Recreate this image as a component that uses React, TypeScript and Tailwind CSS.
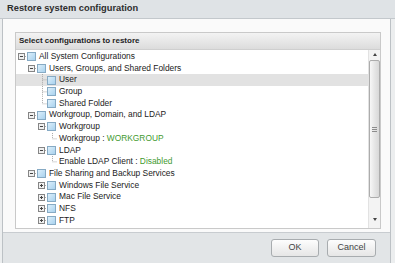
import React from 'react';

type Row = {
  level: number;
  text?: string;
  label?: string;
  value?: string;
  exp?: 'minus' | 'plus';
  elbow?: 'mid' | 'end';
  cb?: boolean;
  selected?: boolean;
};

const rows: Row[] = [
  { level: 0, text: 'All System Configurations', exp: 'minus', cb: true },
  { level: 1, text: 'Users, Groups, and Shared Folders', exp: 'minus', cb: true },
  { level: 2, text: 'User', elbow: 'mid', cb: true, selected: true },
  { level: 2, text: 'Group', elbow: 'mid', cb: true },
  { level: 2, text: 'Shared Folder', elbow: 'end', cb: true },
  { level: 1, text: 'Workgroup, Domain, and LDAP', exp: 'minus', cb: true },
  { level: 2, text: 'Workgroup', exp: 'minus', cb: true },
  { level: 3, label: 'Workgroup : ', value: 'WORKGROUP', elbow: 'end' },
  { level: 2, text: 'LDAP', exp: 'minus', cb: true },
  { level: 3, label: 'Enable LDAP Client : ', value: 'Disabled', elbow: 'end' },
  { level: 1, text: 'File Sharing and Backup Services', exp: 'minus', cb: true },
  { level: 2, text: 'Windows File Service', exp: 'plus', cb: true },
  { level: 2, text: 'Mac File Service', exp: 'plus', cb: true },
  { level: 2, text: 'NFS', exp: 'plus', cb: true },
  { level: 2, text: 'FTP', exp: 'plus', cb: true },
];

function Expander({ kind }: { kind: 'minus' | 'plus' }) {
  return (
    <svg width="9" height="9" viewBox="0 0 9 9" className="shrink-0">
      <rect x="0.5" y="1.5" width="6" height="6" fill="#f0f0f0" stroke="#858585" />
      <line x1="2" y1="4.5" x2="5" y2="4.5" stroke="#444" />
      {kind === 'plus' && <line x1="3.5" y1="3" x2="3.5" y2="6" stroke="#444" />}
      <line x1="7" y1="4.5" x2="9" y2="4.5" stroke="#aaa" strokeDasharray="1 1" />
    </svg>
  );
}

function Elbow({ kind }: { kind: 'mid' | 'end' }) {
  return (
    <svg width="9" height="12" viewBox="0 0 9 12" preserveAspectRatio="none" className="shrink-0 h-full">
      <line x1="4.5" y1="0" x2="4.5" y2={kind === 'mid' ? 12 : 6} stroke="#a8a8a8" strokeDasharray="1 1" />
      <line x1="4.5" y1="6" x2="9" y2="6" stroke="#a8a8a8" strokeDasharray="1 1" />
    </svg>
  );
}

function Checkbox() {
  return (
    <div className="w-[9px] h-[9px] shrink-0 border border-[#86aac4] bg-gradient-to-br from-[#dceffb] to-[#a9d2ee]" />
  );
}

function TreeRow({ row }: { row: Row }) {
  return (
    <div
      className={`h-[11.7px] flex items-center ${row.selected ? 'bg-[#e2e2e2]' : ''}`}
      style={{ paddingLeft: 2 + row.level * 10 }}
    >
      {row.exp && <Expander kind={row.exp} />}
      {row.elbow && <Elbow kind={row.elbow} />}
      {row.cb && <Checkbox />}
      {row.text && <span className="ml-[3px] whitespace-nowrap text-[#222]">{row.text}</span>}
      {row.label && (
        <span className="ml-[2px] whitespace-nowrap text-[#222]">
          {row.label}
          <span className="text-[#3f9a2f]">{row.value}</span>
        </span>
      )}
    </div>
  );
}

function Scrollbar() {
  return (
    <div className="w-[12px] shrink-0 bg-[#f3f3f3] border-l border-[#e2e2e2] flex flex-col items-center">
      <div className="h-[9px] w-full flex items-center justify-center">
        <div className="w-0 h-0 border-l-[2.5px] border-r-[2.5px] border-b-[3px] border-l-transparent border-r-transparent border-b-[#444]" />
      </div>
      <div className="mt-[1px] h-[138px] w-[11px] rounded-[2px] border border-[#acacac] bg-gradient-to-r from-[#f7f7f7] via-[#e6e6e6] to-[#d8d8d8] flex flex-col items-center justify-center gap-[1px]">
        <div className="w-[5px] h-px bg-[#8c8c8c]" />
        <div className="w-[5px] h-px bg-[#8c8c8c]" />
        <div className="w-[5px] h-px bg-[#8c8c8c]" />
      </div>
      <div className="flex-1" />
      <div className="h-[9px] w-full flex items-center justify-center mb-[4px]">
        <div className="w-0 h-0 border-l-[2.5px] border-r-[2.5px] border-t-[3px] border-l-transparent border-r-transparent border-t-[#444]" />
      </div>
    </div>
  );
}

export default function App() {
  return (
    <div
      className="w-[395px] h-[263px] flex flex-col bg-[#eceeef] overflow-hidden"
      style={{ fontFamily: '"Liberation Sans", Arial, sans-serif' }}
    >
      <div className="h-[19px] shrink-0 bg-[#dfe3e6] border-b border-[#c3c8cc] flex items-center pl-[7px]">
        <span className="text-[9.3px] font-bold text-[#2e2e2e]">Restore system configuration</span>
      </div>

      <div className="flex-1 ml-[2px] mr-[4px] border-x border-[#bcc1c5] flex flex-col">
        <div className="flex-1 bg-[#fafafa] pt-[13px] pl-[12px] pr-[9px] pb-[3px] flex">
          <div className="flex-1 border border-[#c9c9c9] bg-white flex flex-col">
            <div className="h-[17px] shrink-0 bg-gradient-to-b from-[#f3f3f3] to-[#dcdcdc] border-b border-[#cfcfcf] flex items-center pl-[3px]">
              <span className="text-[8px] font-bold text-[#1e1e1e]">Select configurations to restore</span>
            </div>
            <div className="flex-1 flex min-h-0">
              <div className="flex-1 text-[8.4px] leading-[11.7px] pt-[1px]">
                {rows.map((r, i) => (
                  <TreeRow key={i} row={r} />
                ))}
              </div>
              <Scrollbar />
            </div>
          </div>
        </div>

        <div className="h-[31px] shrink-0 bg-[#e2e5e7] border-t border-[#c8ccd0] flex items-center justify-end gap-[8px] pr-[14px]">
          <button className="w-[48px] h-[18px] rounded-[3px] border border-[#a8acaf] bg-gradient-to-b from-[#fdfdfd] to-[#e6e6e6] text-[9px] text-[#444]">
            OK
          </button>
          <button className="w-[49px] h-[18px] rounded-[3px] border border-[#a8acaf] bg-gradient-to-b from-[#fdfdfd] to-[#e6e6e6] text-[9px] text-[#444]">
            Cancel
          </button>
        </div>
      </div>
    </div>
  );
}
